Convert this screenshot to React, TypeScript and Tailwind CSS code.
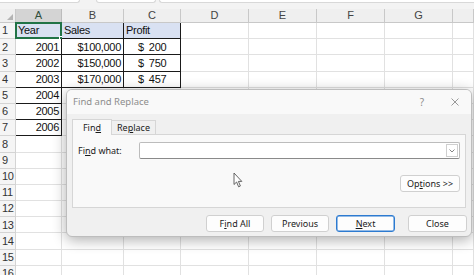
import React from "react";

const cols = ["A", "B", "C", "D", "E", "F", "G", ""];

type Cell = { text?: string; align?: "left" | "right"; money?: string; blue?: boolean; boxed?: boolean };

const data: Record<number, Cell[]> = {
  1: [
    { text: "Year", align: "left", blue: true, boxed: true },
    { text: "Sales", align: "left", blue: true, boxed: true },
    { text: "Profit", align: "left", blue: true, boxed: true },
  ],
  2: [
    { text: "2001", align: "right", boxed: true },
    { text: "$100,000", align: "right", boxed: true },
    { money: "200", boxed: true },
  ],
  3: [
    { text: "2002", align: "right", boxed: true },
    { text: "$150,000", align: "right", boxed: true },
    { money: "750", boxed: true },
  ],
  4: [
    { text: "2003", align: "right", boxed: true },
    { text: "$170,000", align: "right", boxed: true },
    { money: "457", boxed: true },
  ],
  5: [{ text: "2004", align: "right", boxed: true }],
  6: [{ text: "2005", align: "right", boxed: true }],
  7: [{ text: "2006", align: "right", boxed: true }],
};

function SheetCell({ cell, selected }: { cell?: Cell; selected?: boolean }) {
  const border = cell?.boxed ? "border-[#1a1a1a]" : "border-[#e1e1e1]";
  return (
    <div
      className={`relative h-[16.2px] border-r border-b ${border} ${cell?.blue ? "bg-[#d9e1f2]" : "bg-white"} flex items-center px-[2px] text-[11px] tracking-[-0.3px] text-[#111] ${
        cell?.align === "right" ? "justify-end" : "justify-start"
      }`}
    >
      {cell?.money ? (
        <div className="flex pl-[12px]">
          <span>$</span>
          <span className="ml-[5px]">{cell.money}</span>
        </div>
      ) : (
        cell?.text
      )}
      {selected && (
        <div className="absolute -inset-x-[1px] -top-[1px] -bottom-[1px] border-2 border-[#217346]">
          <div className="absolute -right-[3px] -bottom-[3px] w-[4px] h-[4px] bg-[#217346] border border-white" />
        </div>
      )}
    </div>
  );
}

function Btn({ children, w, focus }: { children: React.ReactNode; w: string; focus?: boolean }) {
  return (
    <div
      className={`${w} h-[17px] flex items-center justify-center rounded-[3px] bg-[#fdfdfd] ${
        focus ? "border border-[#2c7ad0] shadow-[inset_0_0_0_0.5px_#2c7ad0]" : "border border-[#d0d0d0]"
      }`}
    >
      {children}
    </div>
  );
}

export default function App() {
  const rows = Array.from({ length: 16 }, (_, i) => i + 1);
  return (
    <div className="relative w-[474px] h-[275px] overflow-hidden bg-white font-['Liberation_Sans',Arial,sans-serif]">
      {/* formula bar remnants */}
      <div className="h-[9px] bg-[#f3f3f3] flex gap-[3px]">
        <div className="w-[80px] h-[3px] bg-white border-b border-r border-[#d8d8d8] rounded-br-[3px]" />
        <div className="w-[10px]" />
        <div className="w-[60px] h-[3px] bg-white border-b border-x border-[#d8d8d8] rounded-b-[3px]" />
        <div className="flex-1 h-[3px] bg-white border-b border-l border-[#d8d8d8] rounded-bl-[3px]" />
      </div>

      {/* sheet */}
      <div className="grid grid-cols-[16px_46px_62px_57px_68px_68px_68px_68px_1fr]">
        <div className="relative h-[14px] bg-[#efefef] border-r border-b border-[#c8c8c8]">
          <div className="absolute right-[2px] bottom-[2px] w-0 h-0 border-l-[6px] border-l-transparent border-b-[6px] border-b-[#b4b4b4]" />
        </div>
        {cols.map((c, i) => (
          <div
            key={i}
            className={`h-[14px] flex items-center justify-center text-[11px] border-r border-b ${
              i === 0
                ? "bg-[#d4d4d4] text-[#2f4f3c] border-[#bcbcbc]"
                : "bg-[#efefef] text-[#444] border-[#c8c8c8]"
            }`}
          >
            {c}
          </div>
        ))}
        {rows.map((r) => (
          <React.Fragment key={r}>
            <div className="h-[16.2px] flex items-center pl-[2px] text-[11px] tracking-[-0.3px] border-b border-r bg-[#f5f5f5] text-[#333] border-[#d4d4d4]">
              {r}
            </div>
            {cols.map((_, ci) => (
              <SheetCell key={ci} cell={data[r]?.[ci]} selected={r === 1 && ci === 0} />
            ))}
          </React.Fragment>
        ))}
      </div>

      {/* Find and Replace dialog */}
      <div className="absolute left-[66px] top-[89px] w-[406px] h-[148px] rounded-[6px] border border-[#bdbdbd] bg-[#f0f0f0] shadow-[0_3px_14px_rgba(0,0,0,0.32)] overflow-hidden font-['Noto_Sans','Open_Sans',sans-serif] text-[9px] text-[#1b1b1b]">
        <div className="h-[24px] bg-[#f9f9f9] flex items-center pl-[6px] pr-[10px] text-[#8d8d8d]">
          <span className="text-[9.5px]">Find and Replace</span>
          <span className="ml-auto mr-[27px] text-[10px]">?</span>
          <svg width="8" height="8" viewBox="0 0 8 8" className="mr-[2px]">
            <path d="M0.5 0.5 L7.5 7.5 M7.5 0.5 L0.5 7.5" stroke="#8d8d8d" strokeWidth="0.9" />
          </svg>
        </div>

        <div className="px-[5px] pt-[5px]">
          <div className="flex h-[16px] items-end">
            <div className="w-[40px] h-[16px] flex items-center justify-center bg-[#f9f9f9] border border-b-0 border-[#d6d6d6] relative z-10">
              Fin<u className="underline-offset-1">d</u>
            </div>
            <div className="w-[44px] h-[15px] flex items-center justify-center border-t border-r border-[#d6d6d6]">
              Re<u className="underline-offset-1">p</u>lace
            </div>
          </div>
          <div className="relative h-[74px] -mt-px bg-[#f9f9f9] border border-[#d6d6d6] px-[5px] pt-[7px]">
            <div className="flex items-center">
              <span className="w-[61px]">
                Fi<u className="underline-offset-1">n</u>d what:
              </span>
              <div className="flex-1 h-[17px] bg-white border border-[#bcbcbc] border-b-[#8a8a8a] rounded-[2px] flex justify-end items-center pr-[1px]">
                <div className="w-[12px] h-[13px] border border-[#cfcfcf] flex items-center justify-center">
                  <svg width="6" height="4" viewBox="0 0 6 4">
                    <path d="M0.5 0.5 L3 3 L5.5 0.5" stroke="#666" strokeWidth="0.8" fill="none" />
                  </svg>
                </div>
              </div>
            </div>
            <div className="relative h-[49px]">
              {/* mouse pointer */}
              <svg width="10" height="16" viewBox="0 0 10 16" className="absolute left-[155px] top-[13px]">
                <path d="M1 1 L1 12.5 L3.6 10 L5.6 14.8 L7.4 14 L5.4 9.4 L8.8 9.4 Z" fill="#fff" stroke="#555" strokeWidth="0.9" strokeLinejoin="round" />
              </svg>
              <div className="absolute right-[0px] top-[16px]">
                <Btn w="w-[60px]">
                  Op<u className="underline-offset-1">t</u>ions &gt;&gt;
                </Btn>
              </div>
            </div>
          </div>
          <div className="flex justify-end pt-[7px] -mr-[1px]">
            <Btn w="w-[58px]">
              F<u className="underline-offset-1">i</u>nd All
            </Btn>
            <div className="w-[7px]" />
            <Btn w="w-[58px]">Previous</Btn>
            <div className="w-[7px]" />
            <Btn w="w-[59px]" focus>
              <u className="underline-offset-1">N</u>ext
            </Btn>
            <div className="w-[13px]" />
            <Btn w="w-[59px]">Close</Btn>
          </div>
        </div>
      </div>
    </div>
  );
}
